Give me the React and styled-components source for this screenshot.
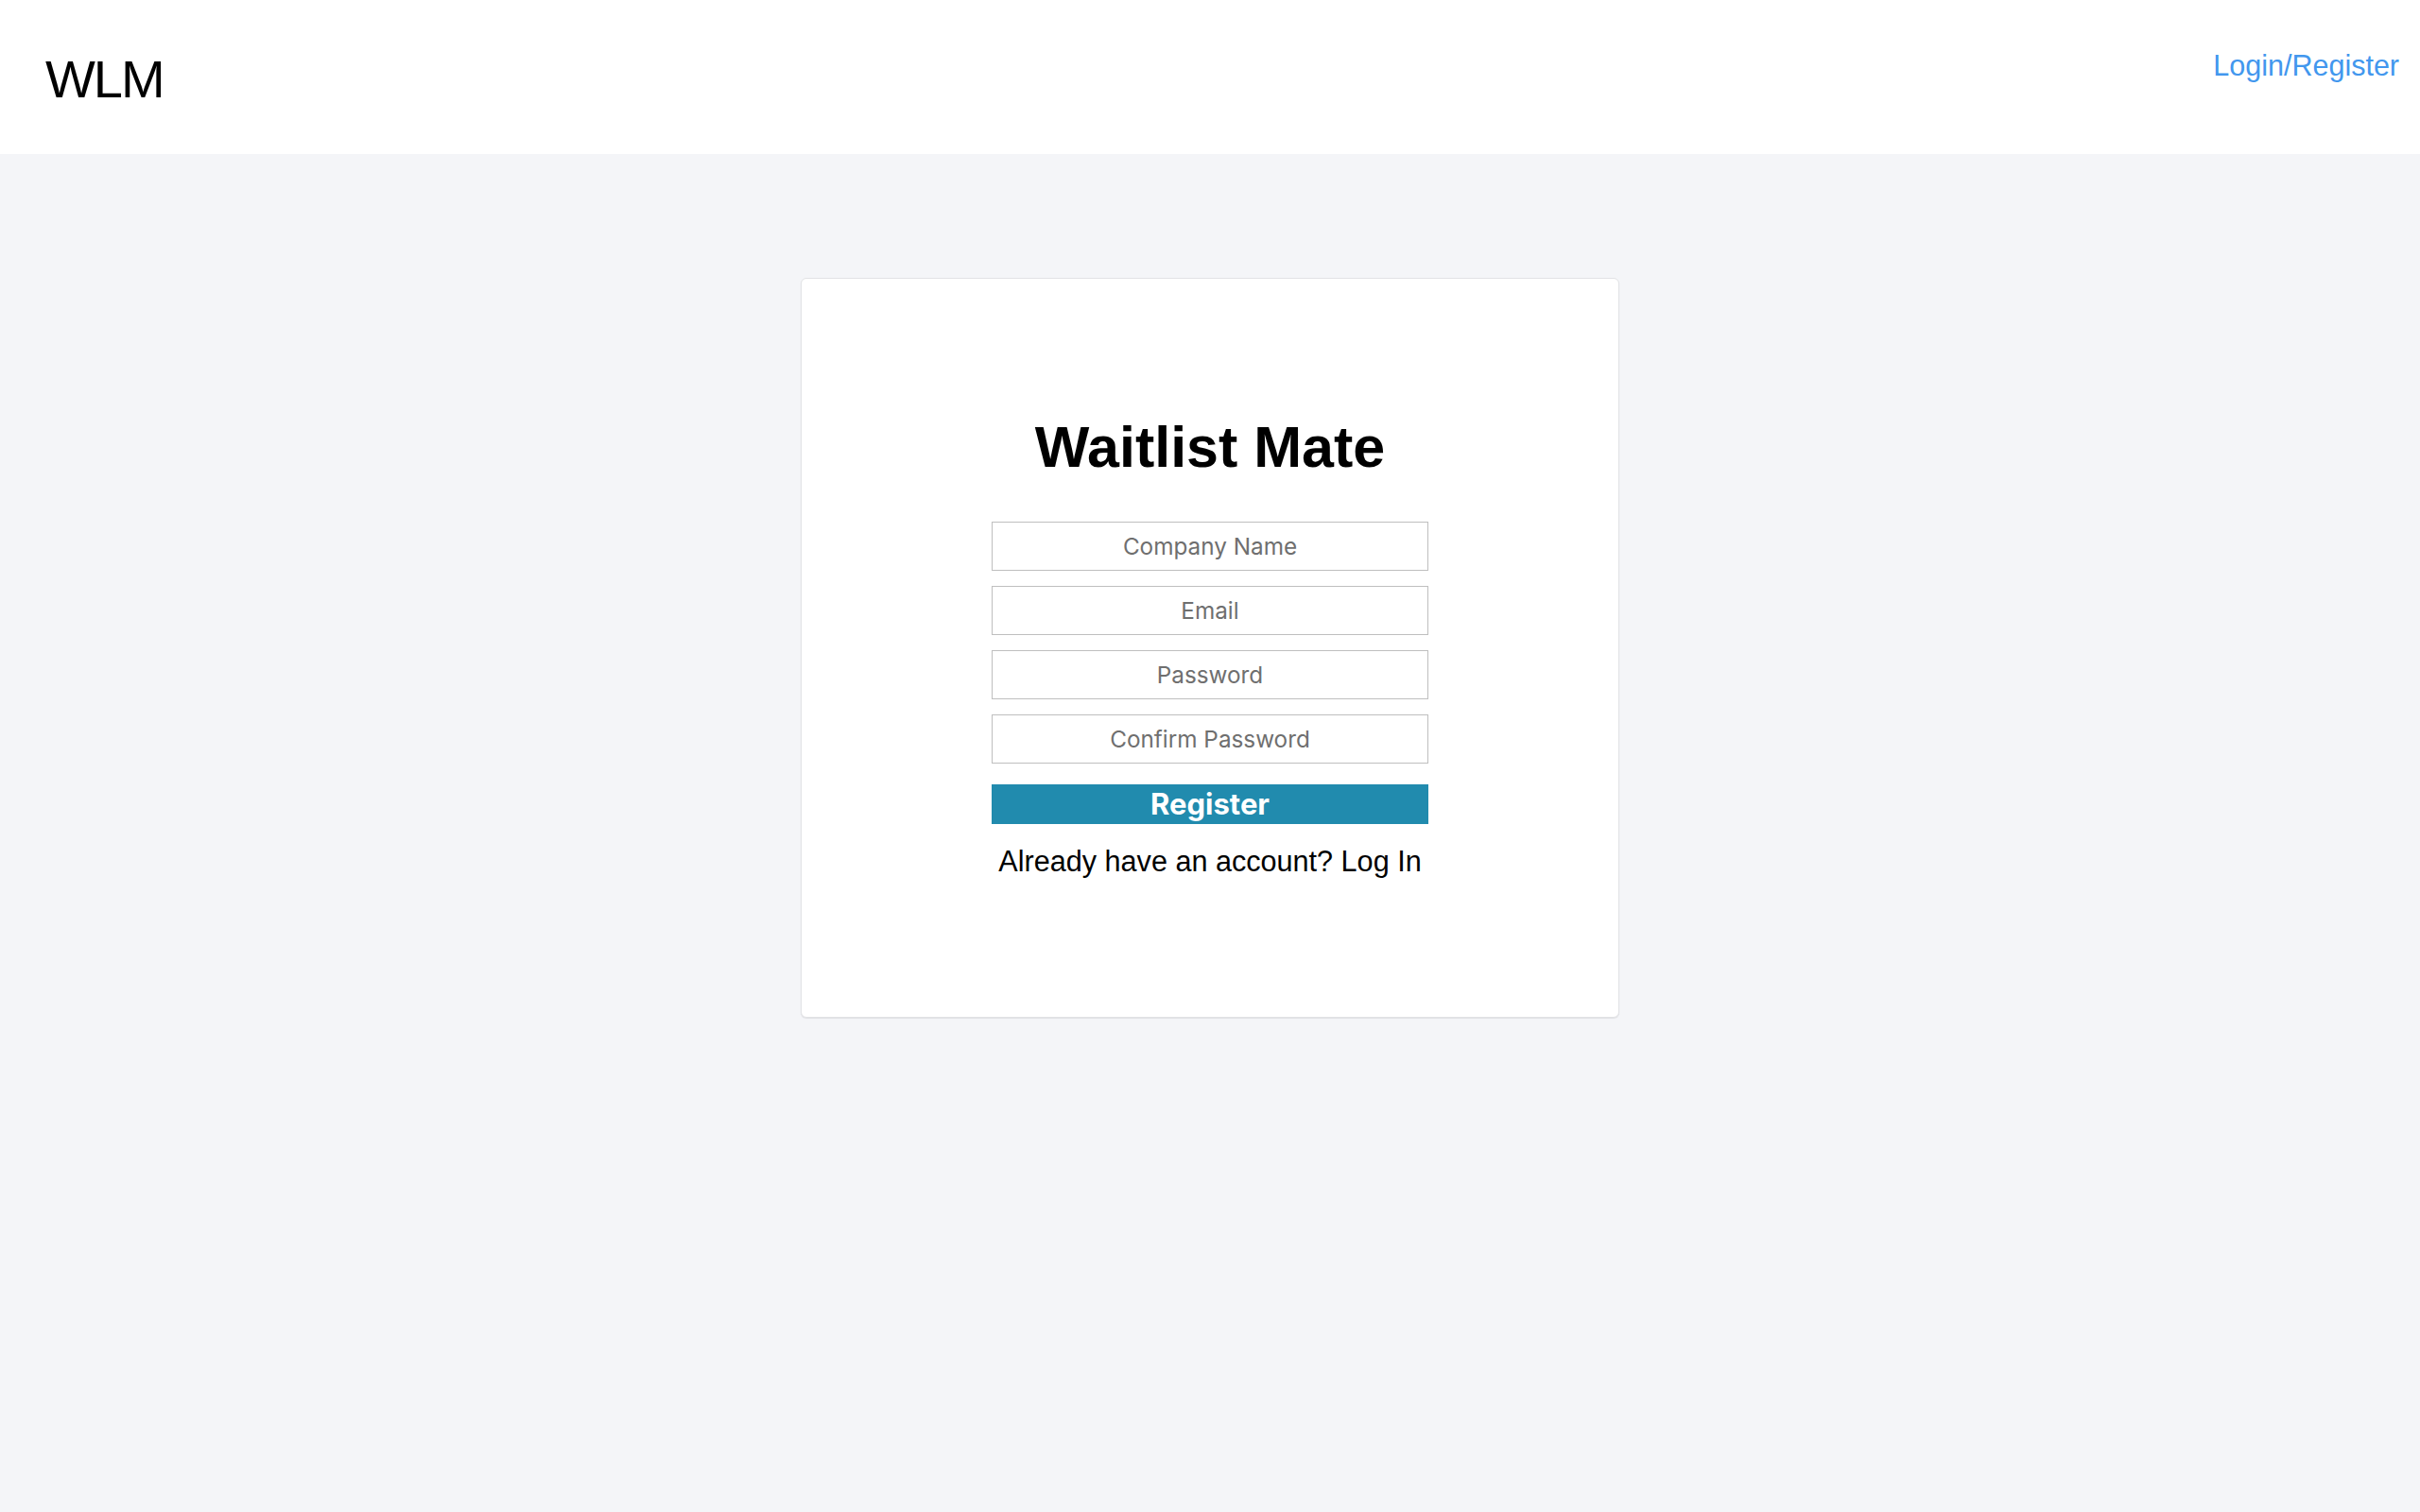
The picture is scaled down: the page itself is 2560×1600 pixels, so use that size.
import React from "react";
import styled, { createGlobalStyle } from "styled-components";

const Global = createGlobalStyle`
  html, body { margin: 0; padding: 0; }
  body {
    background: #f4f5f8;
    font-family: "Liberation Sans", Arial, sans-serif;
    min-height: 1600px;
  }
  * { box-sizing: border-box; }
`;

const Header = styled.header`
  height: 163px;
  background: #ffffff;
  display: flex;
  justify-content: space-between;
  align-items: flex-start;
  padding: 0 22px 0 48px;
`;

const Brand = styled.div`
  font-family: "Liberation Sans", Arial, sans-serif;
  font-size: 56px;
  letter-spacing: -2px;
  line-height: 66px;
  color: #000;
  margin-top: 51px;
`;

const NavLink = styled.a`
  font-family: "Liberation Sans", Arial, sans-serif;
  font-size: 30.5px;
  line-height: 36px;
  color: #4297ee;
  text-decoration: none;
  margin-top: 51px;
  cursor: pointer;
`;

const Main = styled.main`
  display: flex;
  justify-content: center;
  padding-top: 131px;
`;

const Card = styled.section`
  width: 866px;
  background: #ffffff;
  border: 1px solid #e1e2e5;
  border-radius: 6px;
  box-shadow: 0 1px 1px rgba(0, 0, 0, 0.08);
  padding: 143px 0 147px;
  display: flex;
  flex-direction: column;
  align-items: center;
`;

const Title = styled.h1`
  margin: 0 0 44px;
  font-family: "Liberation Sans", Arial, sans-serif;
  font-weight: 700;
  font-size: 61px;
  line-height: 70px;
  color: #000;
`;

const Form = styled.form`
  width: 462px;
  display: flex;
  flex-direction: column;
  gap: 16px;
`;

const Field = styled.input`
  width: 100%;
  height: 52px;
  border: 1px solid #bfbfbf;
  border-radius: 0;
  background: #fff;
  text-align: center;
  font-family: Inter, "Noto Sans", sans-serif;
  font-size: 24.3px;
  color: #333;
  outline: none;
  padding: 0 8px;
  &::placeholder {
    color: #6f6f6f;
  }
`;

const SubmitButton = styled.button`
  margin-top: 6px;
  width: 100%;
  height: 42px;
  border: none;
  border-radius: 0;
  background: #218bae;
  color: #ffffff;
  font-family: Inter, "Noto Sans", sans-serif;
  font-weight: 700;
  font-size: 31px;
  line-height: 42px;
  padding: 0;
  cursor: pointer;
`;

const Footnote = styled.p`
  margin: 22px 0 0;
  font-family: "Liberation Sans", Arial, sans-serif;
  font-size: 30.6px;
  line-height: 35px;
  color: #000;
  text-align: center;
`;

export default function App() {
  return (
    <>
      <Global />
      <Header>
        <Brand>WLM</Brand>
        <NavLink>Login/Register</NavLink>
      </Header>
      <Main>
        <Card>
          <Title>Waitlist Mate</Title>
          <Form onSubmit={(e) => e.preventDefault()}>
            <Field type="text" placeholder="Company Name" />
            <Field type="email" placeholder="Email" />
            <Field type="password" placeholder="Password" />
            <Field type="password" placeholder="Confirm Password" />
            <SubmitButton type="submit">Register</SubmitButton>
          </Form>
          <Footnote>Already have an account? Log In</Footnote>
        </Card>
      </Main>
    </>
  );
}
